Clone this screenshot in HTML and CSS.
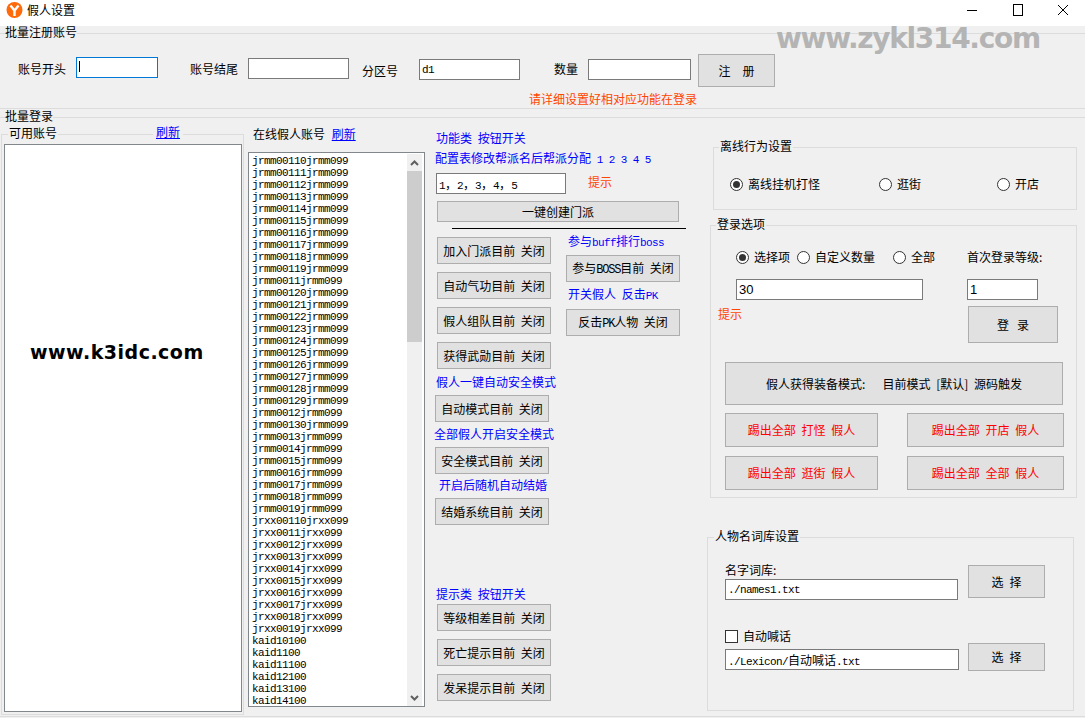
FILE: index.html
```html
<!DOCTYPE html>
<html lang="zh-CN">
<head>
    <meta charset="UTF-8">
    <title>假人设置</title>
    <link rel="stylesheet" href="styles.css">
</head>
<body>
    <div class="window">
        <div class="titlebar">
            <svg class="app-icon" width="18" height="18" viewBox="0 0 18 18">
                <circle cx="8.5" cy="9" r="8" fill="#ff6a0a"/>
                <path d="M4.5 4.5 L8.5 9.5 L12.5 4.5 M8.5 9.5 V15" fill="none" stroke="#fff" stroke-width="2.4"/>
            </svg>
            <span class="title">假人设置</span>
            <div class="win-btns">
                <div class="win-btn"><svg width="12" height="12" viewBox="0 0 12 12"><path d="M1 6.5 H11" stroke="#000"/></svg></div>
                <div class="win-btn"><svg width="12" height="12" viewBox="0 0 12 12"><rect x="1.5" y="0.5" width="9" height="11" fill="none" stroke="#000"/></svg></div>
                <div class="win-btn last"><svg width="12" height="12" viewBox="0 0 12 12"><path d="M1 1 L11 11 M11 1 L1 11" stroke="#000"/></svg></div>
            </div>
        </div>

        <div class="site-mark">www.zykl314.com</div>

        <fieldset class="band reg-band">
            <legend>批量注册账号</legend>
            <div class="reg-row">
                <span class="reg-l1">账号开头</span>
                <div class="field focus w82"><i class="caret"></i></div>
                <span class="reg-l2">账号结尾</span>
                <input class="field w101 reg-i2" type="text">
                <span class="reg-l3">分区号</span>
                <input class="field w101 reg-i3 mono" type="text" value="d1">
                <span class="reg-l4">数量</span>
                <input class="field w103 reg-i4" type="text">
                <button class="btn reg-btn">注册</button>
            </div>
            <div class="reg-msg">请详细设置好相对应功能在登录</div>
        </fieldset>

        <fieldset class="band login-band">
            <legend>批量登录</legend>
            <div class="login-cols">
                <fieldset class="col-free">
                    <legend>可用账号</legend>
                    <a class="refresh free-refresh" href="#">刷新</a>
                    <div class="free-list"><span class="idc-mark">www.k3idc.com</span></div>
                </fieldset>

                <div class="col-online">
                    <div class="online-head">在线假人账号 <a class="refresh" href="#">刷新</a></div>
                    <div class="online-list">
                        <div class="names">
                            <div>jrmm00110jrmm099</div>
                            <div>jrmm00111jrmm099</div>
                            <div>jrmm00112jrmm099</div>
                            <div>jrmm00113jrmm099</div>
                            <div>jrmm00114jrmm099</div>
                            <div>jrmm00115jrmm099</div>
                            <div>jrmm00116jrmm099</div>
                            <div>jrmm00117jrmm099</div>
                            <div>jrmm00118jrmm099</div>
                            <div>jrmm00119jrmm099</div>
                            <div>jrmm0011jrmm099</div>
                            <div>jrmm00120jrmm099</div>
                            <div>jrmm00121jrmm099</div>
                            <div>jrmm00122jrmm099</div>
                            <div>jrmm00123jrmm099</div>
                            <div>jrmm00124jrmm099</div>
                            <div>jrmm00125jrmm099</div>
                            <div>jrmm00126jrmm099</div>
                            <div>jrmm00127jrmm099</div>
                            <div>jrmm00128jrmm099</div>
                            <div>jrmm00129jrmm099</div>
                            <div>jrmm0012jrmm099</div>
                            <div>jrmm00130jrmm099</div>
                            <div>jrmm0013jrmm099</div>
                            <div>jrmm0014jrmm099</div>
                            <div>jrmm0015jrmm099</div>
                            <div>jrmm0016jrmm099</div>
                            <div>jrmm0017jrmm099</div>
                            <div>jrmm0018jrmm099</div>
                            <div>jrmm0019jrmm099</div>
                            <div>jrxx00110jrxx099</div>
                            <div>jrxx0011jrxx099</div>
                            <div>jrxx0012jrxx099</div>
                            <div>jrxx0013jrxx099</div>
                            <div>jrxx0014jrxx099</div>
                            <div>jrxx0015jrxx099</div>
                            <div>jrxx0016jrxx099</div>
                            <div>jrxx0017jrxx099</div>
                            <div>jrxx0018jrxx099</div>
                            <div>jrxx0019jrxx099</div>
                            <div>kaid10100</div>
                            <div>kaid1100</div>
                            <div>kaid11100</div>
                            <div>kaid12100</div>
                            <div>kaid13100</div>
                            <div>kaid14100</div>
                        </div>
                        <div class="scrollbar">
                            <div class="sb-arrow"><svg width="9" height="6" viewBox="0 0 9 6"><path d="M1 5 L4.5 1.5 L8 5" fill="none" stroke="#606060" stroke-width="2"/></svg></div>
                            <div class="sb-thumb"></div>
                            <div class="sb-arrow sb-down"><svg width="9" height="6" viewBox="0 0 9 6"><path d="M1 1 L4.5 4.5 L8 1" fill="none" stroke="#606060" stroke-width="2"/></svg></div>
                        </div>
                    </div>
                </div>

                <div class="col-func">
                    <div class="blue func-l1">功能类 按钮开关</div>
                    <div class="blue func-l2">配置表修改帮派名后帮派分配 <span class="mono">1 2 3 4 5</span></div>
                    <div class="sect-row">
                        <div class="field w130 mono-mix"><span class="mono">1</span>，<span class="mono">2</span>，<span class="mono">3</span>，<span class="mono">4</span>，<span class="mono">5</span></div>
                        <span class="hint">提示</span>
                    </div>
                    <button class="btn sect-btn">一键创建门派</button>
                    <div class="rule"></div>
                    <div class="func-split">
                        <div class="func-left">
                            <div class="stack">
                                <button class="btn toggle">加入门派目前 关闭</button>
                                <button class="btn toggle">自动气功目前 关闭</button>
                                <button class="btn toggle">假人组队目前 关闭</button>
                                <button class="btn toggle">获得武勋目前 关闭</button>
                            </div>
                            <div class="blue cap-a">假人一键自动安全模式</div>
                            <button class="btn toggle back">自动模式目前 关闭</button>
                            <div class="blue cap-b">全部假人开启安全模式</div>
                            <button class="btn toggle back">安全模式目前 关闭</button>
                            <div class="blue cap-c">开启后随机自动结婚</div>
                            <button class="btn toggle back">结婚系统目前 关闭</button>
                            <div class="blue cap-d">提示类 按钮开关</div>
                            <div class="stack hints">
                                <button class="btn toggle">等级相差目前 关闭</button>
                                <button class="btn toggle">死亡提示目前 关闭</button>
                                <button class="btn toggle">发呆提示目前 关闭</button>
                            </div>
                        </div>
                        <div class="func-right">
                            <div class="blue cap-boss">参与<span class="mono">buff</span>排行<span class="mono">boss</span></div>
                            <button class="btn toggle">参与<span class="mono">BOSS</span>目前 关闭</button>
                            <div class="blue cap-pk">开关假人 反击<span class="mono">PK</span></div>
                            <button class="btn toggle">反击<span class="mono">PK</span>人物 关闭</button>
                        </div>
                    </div>
                </div>

                <div class="col-side">
                    <fieldset class="group offline">
                        <legend>离线行为设置</legend>
                        <div class="offline-row">
                            <label class="opt"><input type="radio" name="offline" checked>离线挂机打怪</label>
                            <label class="opt"><input type="radio" name="offline">逛街</label>
                            <label class="opt"><input type="radio" name="offline">开店</label>
                        </div>
                    </fieldset>

                    <fieldset class="group login-opts">
                        <legend>登录选项</legend>
                        <div class="opts-row">
                            <label class="opt"><input type="radio" name="count" checked>选择项</label>
                            <label class="opt"><input type="radio" name="count">自定义数量</label>
                            <label class="opt"><input type="radio" name="count">全部</label>
                            <span>首次登录等级:</span>
                        </div>
                        <div class="opts-inputs">
                            <input class="field w187 sans" type="text" value="30">
                            <input class="field w71 sans" type="text" value="1">
                        </div>
                        <div class="opts-login">
                            <span class="hint">提示</span>
                            <button class="btn login-btn">登录</button>
                        </div>
                        <button class="btn equip-btn">假人获得装备模式:&nbsp;&nbsp;&nbsp;目前模式 [默认] 源码触发</button>
                        <div class="kick-grid">
                            <button class="btn kick">踢出全部 打怪 假人</button>
                            <button class="btn kick">踢出全部 开店 假人</button>
                            <button class="btn kick">踢出全部 逛街 假人</button>
                            <button class="btn kick">踢出全部 全部 假人</button>
                        </div>
                    </fieldset>

                    <fieldset class="group lexicon">
                        <legend>人物名词库设置</legend>
                        <div class="lex-row">
                            <div class="lex-left">
                                <div>名字词库:</div>
                                <input class="field w233 mono lex-input" type="text" value="./names1.txt">
                            </div>
                            <button class="btn pick tall">选择</button>
                        </div>
                        <div class="lex-row second">
                            <div class="lex-left">
                                <label class="opt"><input class="check" type="checkbox">自动喊话</label>
                                <div class="field w234 lex-input mono-mix"><span class="mono">./Lexicon/</span>自动喊话<span class="mono">.txt</span></div>
                            </div>
                            <button class="btn pick low">选择</button>
                        </div>
                    </fieldset>
                </div>
            </div>
        </fieldset>
    </div>
</body>
</html>
```

FILE: styles.css
```css
* {
    box-sizing: border-box;
}

body {
    margin: 0;
    background: #f0f0f0;
    color: #000;
    font-family: "Noto Sans CJK SC", "Liberation Sans", sans-serif;
    font-size: 12px;
    line-height: 14px;
    word-spacing: 3px;
    overflow: hidden;
}

.window {
    position: relative;
    width: 1085px;
    height: 718px;
    overflow: hidden;
}

/* title bar */
.titlebar {
    display: flex;
    align-items: center;
    height: 26px;
    background: #fff;
    padding: 0 0 6px 6px;
}

.app-icon {
    margin-right: 3px;
}

.win-btns {
    display: flex;
    margin-left: auto;
}

.win-btn {
    display: flex;
    justify-content: center;
    width: 46px;
}

.win-btn.last {
    width: 44px;
}

/* watermarks */
.site-mark {
    position: absolute;
    left: 776px;
    top: 23px;
    color: #b4b4b4;
    font-family: "DejaVu Sans", sans-serif;
    font-size: 28px;
    font-weight: bold;
    line-height: 32px;
    letter-spacing: -1.3px;
    z-index: 2;
}

.idc-mark {
    font-family: "DejaVu Sans", sans-serif;
    font-size: 19px;
    font-weight: bold;
    line-height: 22px;
    letter-spacing: 0.5px;
}

/* shared */
fieldset {
    margin: 0;
    padding: 0;
    min-width: 0;
    border: 1px solid #dcdcdc;
}

legend {
    height: 14px;
    padding: 0;
    line-height: 12px;
}

.band {
    width: 100%;
    border-width: 1px 0;
}

.band > legend {
    margin-left: 5px;
}

.mono {
    font-family: "Liberation Mono", monospace;
    font-size: 11px;
    letter-spacing: -0.6px;
    word-spacing: 0;
}

.btn .mono {
    font-size: 12px;
    letter-spacing: -1.2px;
}

.sans {
    font-family: "Liberation Sans", sans-serif;
    font-size: 13px;
}

.blue {
    color: #00f;
}

.hint {
    color: #ff4500;
}

.refresh {
    color: #00f;
}

.field {
    display: block;
    height: 21px;
    margin: 0;
    padding: 1px 2px;
    border: 1px solid #7a7a7a;
    border-radius: 0;
    outline: none;
    background: #fff;
    color: #000;
    line-height: 17px;
}

.mono-mix {
    white-space: nowrap;
}

.focus {
    border-color: #0078d7;
}

.caret {
    display: block;
    width: 1px;
    height: 11px;
    margin-top: 2px;
    background: #000;
}

.w71 { width: 71px; }
.w82 { width: 82px; }
.w101 { width: 101px; }
.w103 { width: 103px; }
.w130 { width: 130px; }
.w187 { width: 187px; }
.w233 { width: 233px; }
.w234 { width: 234px; }

.btn {
    display: block;
    margin: 0;
    padding: 0;
    border: 1px solid #adadad;
    background: #e1e1e1;
    color: #000;
    font-family: inherit;
    font-size: 12px;
    line-height: 14px;
    word-spacing: 3px;
}

/* register band */
.reg-band {
    height: 83px;
}

.reg-row {
    display: flex;
    align-items: flex-start;
    height: 48px;
}

.reg-l1 {
    margin: 22px 10px 0 18px;
}

.reg-row .w82 {
    margin-top: 17px;
}

.reg-l2 {
    margin: 22px 10px 0 32px;
}

.reg-i2 {
    margin-top: 18px;
}

.reg-l3 {
    margin: 24px 21px 0 13px;
}

.reg-i3 {
    margin-top: 19px;
}

.reg-l4 {
    margin: 22px 10px 0 34px;
}

.reg-i4 {
    margin-top: 19px;
}

.reg-btn {
    width: 77px;
    height: 33px;
    margin: 14px 0 0 7px;
    letter-spacing: 12px;
    text-indent: 12px;
}

.reg-msg {
    margin: 4px 0 0 529px;
    color: #ff4500;
}

/* login band */
.login-band {
    height: 607px;
    margin-top: 1px;
}

.login-cols {
    display: flex;
    align-items: flex-start;
}

.col-free {
    position: relative;
    width: 243px;
    height: 588px;
    margin: 3px 0 0 1px;
    padding: 3px 1px 3px 2px;
}

.col-free legend {
    margin-left: 4px;
    padding: 0 1px;
}

.free-refresh {
    position: absolute;
    left: 151px;
    top: -16px;
    padding: 0 3px;
    background: #f0f0f0;
}

.free-list {
    height: 568px;
    padding: 196px 0 0 25px;
    border: 1px solid #82878c;
    background: #fff;
}

.col-online {
    width: 177px;
    margin: 3px 0 0 4px;
}

.online-head {
    padding-left: 5px;
}

.online-head .refresh {
    margin-left: 1px;
}

.online-list {
    display: flex;
    justify-content: space-between;
    height: 555px;
    margin-top: 11px;
    padding: 1px 2px 0 3px;
    border: 1px solid #82878c;
    background: #fff;
}

.names {
    font-family: "Liberation Mono", monospace;
    font-size: 11px;
    line-height: 12px;
    letter-spacing: -0.6px;
    padding-top: 1px;
}

.scrollbar {
    display: flex;
    flex-direction: column;
    width: 15px;
    height: 552px;
    background: #f0f0f0;
}

.sb-arrow {
    display: flex;
    align-items: center;
    justify-content: center;
    height: 17px;
}

.sb-thumb {
    height: 171px;
    background: #cdcdcd;
}

.sb-down {
    margin-top: auto;
}

/* function column */
.col-func {
    width: 256px;
    margin-left: 9px;
}

.func-l1 {
    margin: 7px 0 0 2px;
}

.func-l2 {
    margin: 6px 0 0 1px;
}

.sect-row {
    display: flex;
    margin: 6px 0 0 2px;
}

.sect-row .hint {
    margin: 2px 0 0 22px;
}

.sect-btn {
    width: 242px;
    height: 21px;
    margin: 7px 0 0 3px;
}

.rule {
    width: 234px;
    height: 1px;
    margin: 6px 0 0 18px;
    background: #000;
}

.func-split {
    display: flex;
    margin-top: 6px;
}

.func-left {
    width: 132px;
    padding: 2px 0 0 3px;
}

.stack {
    display: flex;
    flex-direction: column;
    gap: 8px;
}

.toggle {
    width: 114px;
    height: 27px;
}

.back {
    margin: 6px 0 0 -2px;
}

.cap-a {
    margin: 6px 0 0 -1px;
}

.cap-b {
    margin: 5px 0 0 -3px;
}

.cap-c {
    margin: 4px 0 0 2px;
}

.cap-d {
    margin: 62px 0 0 -1px;
}

.hints {
    margin-top: 3px;
}

.func-right {
    margin-top: -1px;
}

.func-right .blue {
    margin-left: 2px;
}

.func-right .btn {
    margin-top: 6px;
}

.func-right .cap-boss {
    margin-bottom: -1px;
}

.func-right .cap-pk {
    margin-top: 5px;
}

/* right column */
.col-side {
    width: 370px;
    margin-left: 17px;
}

.group legend {
    margin-left: 5px;
    padding: 0 1px;
}

.offline {
    width: 364px;
    height: 70px;
    margin: 16px 0 0 6px;
}

.offline-row {
    display: grid;
    grid-template-columns: 149px 118px auto;
    padding: 23px 0 0 16px;
}

.opt {
    display: flex;
    align-items: center;
    height: 14px;
}

.opt input {
    appearance: none;
    position: relative;
    flex: none;
    width: 13px;
    height: 13px;
    margin: 0 5px 0 0;
    border: 1px solid #333;
    border-radius: 50%;
    background: #fff;
}

.opt input:checked::after {
    content: "";
    position: absolute;
    left: 2px;
    top: 2px;
    width: 7px;
    height: 7px;
    border-radius: 50%;
    background: #333;
}

.opt .check {
    border-radius: 0;
}

.login-opts {
    width: 367px;
    height: 280px;
    margin: 8px 0 0 3px;
}

.opts-row {
    display: grid;
    grid-template-columns: 61px 96px 74px auto;
    padding: 18px 0 0 25px;
}

.opts-inputs {
    display: flex;
    gap: 44px;
    margin: 15px 0 0 25px;
}

.opts-login {
    display: flex;
    justify-content: space-between;
    margin: 6px 18px 0 7px;
}

.opts-login .hint {
    margin-top: 1px;
}

.login-btn {
    width: 90px;
    height: 37px;
    letter-spacing: 8px;
    text-indent: 8px;
}

.equip-btn {
    width: 338px;
    height: 43px;
    margin: 19px 0 0 14px;
}

.kick-grid {
    display: grid;
    grid-template-columns: 153px 157px;
    grid-auto-rows: 34px;
    gap: 9px 29px;
    margin: 8px 0 0 14px;
}

.kick {
    color: #f00;
}

.lexicon {
    width: 367px;
    height: 181px;
    margin-top: 32px;
}

.lexicon legend {
    margin-left: 6px;
}

.lex-row {
    display: flex;
    padding: 19px 0 0 17px;
}

.lex-row.second {
    padding-top: 29px;
}

.lex-left {
    width: 243px;
}

.lex-input {
    margin-top: 2px;
}

.second .lex-input {
    margin-top: 6px;
}

.pick {
    width: 77px;
    letter-spacing: 6px;
    text-indent: 6px;
}

.tall {
    height: 33px;
    margin-top: 2px;
}

.low {
    height: 28px;
    margin-top: 14px;
}
```
